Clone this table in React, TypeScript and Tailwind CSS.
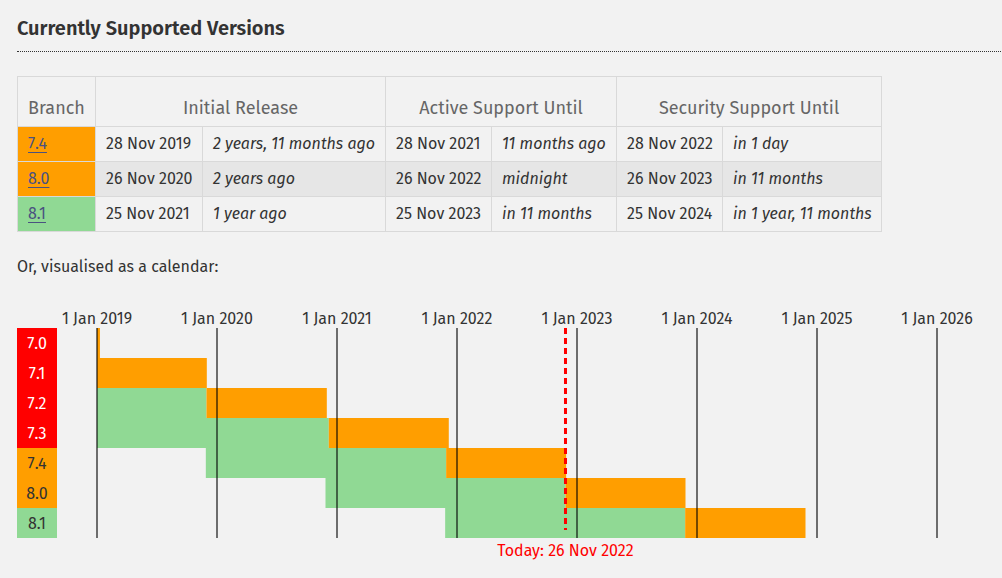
import React from "react";

const FONT = "'Fira Sans', 'Open Sans', 'Noto Sans', sans-serif";

const ORANGE = "#ff9e00";
const GREEN = "#90d994";
const RED = "#ff0000";

type Row = {
  branch: string;
  bg: string;
  rel: string;
  relAgo: string;
  act: string;
  actRel: string;
  sec: string;
  secRel: string;
  shaded: boolean;
};

const rows: Row[] = [
  { branch: "7.4", bg: "bg-[#ff9e00]", rel: "28 Nov 2019", relAgo: "2 years, 11 months ago", act: "28 Nov 2021", actRel: "11 months ago", sec: "28 Nov 2022", secRel: "in 1 day", shaded: false },
  { branch: "8.0", bg: "bg-[#ff9e00]", rel: "26 Nov 2020", relAgo: "2 years ago", act: "26 Nov 2022", actRel: "midnight", sec: "26 Nov 2023", secRel: "in 11 months", shaded: true },
  { branch: "8.1", bg: "bg-[#90d994]", rel: "25 Nov 2021", relAgo: "1 year ago", act: "25 Nov 2023", actRel: "in 11 months", sec: "25 Nov 2024", secRel: "in 1 year, 11 months", shaded: false },
];

const X0 = 97;
const base = Date.UTC(2019, 0, 1);
function dx(y: number, m: number, d: number) {
  const days = (Date.UTC(y, m - 1, d) - base) / 86400000;
  return X0 + (days / 365) * 120;
}

type Br = { name: string; rel: [number, number, number]; act: [number, number, number]; sec: [number, number, number]; color: string; text: string };
const branches: Br[] = [
  { name: "7.0", rel: [2015, 12, 3], act: [2018, 1, 4], sec: [2019, 1, 10], color: RED, text: "#fff" },
  { name: "7.1", rel: [2016, 12, 1], act: [2018, 12, 1], sec: [2019, 12, 1], color: RED, text: "#fff" },
  { name: "7.2", rel: [2017, 11, 30], act: [2019, 11, 30], sec: [2020, 11, 30], color: RED, text: "#fff" },
  { name: "7.3", rel: [2018, 12, 6], act: [2020, 12, 6], sec: [2021, 12, 6], color: RED, text: "#fff" },
  { name: "7.4", rel: [2019, 11, 28], act: [2021, 11, 28], sec: [2022, 11, 28], color: ORANGE, text: "#333" },
  { name: "8.0", rel: [2020, 11, 26], act: [2022, 11, 26], sec: [2023, 11, 26], color: ORANGE, text: "#333" },
  { name: "8.1", rel: [2021, 11, 25], act: [2023, 11, 25], sec: [2024, 11, 25], color: GREEN, text: "#333" },
];

function Chart() {
  const top = 328;
  const rowH = 30;
  const bottom = top + rowH * branches.length;
  const years = [2019, 2020, 2021, 2022, 2023, 2024, 2025, 2026];
  const today = dx(2022, 11, 26);
  return (
    <svg width={985} height={272} className="block mt-[17px]" style={{ fontFamily: FONT }}>
      <g transform="translate(-17,-296)">
        {branches.map((b, i) => {
          const y = top + i * rowH;
          const r = Math.max(X0, dx(...b.rel));
          const a = Math.max(X0, dx(...b.act));
          const s = Math.max(X0, dx(...b.sec));
          return (
            <g key={b.name}>
              {a > r && <rect x={r} y={y} width={a - r} height={rowH} fill={GREEN} />}
              {s > a && <rect x={a} y={y} width={s - a} height={rowH} fill={ORANGE} />}
              <rect x={17} y={y} width={40} height={rowH} fill={b.color} />
              <text x={37} y={y + 21} textAnchor="middle" fontSize={16} fontWeight={400} fill={b.text}>
                {b.name}
              </text>
            </g>
          );
        })}
        {years.map((yr) => {
          const x = X0 + (yr - 2019) * 120;
          return (
            <g key={yr}>
              <line x1={x} y1={top} x2={x} y2={bottom} stroke="#000" strokeOpacity={0.55} strokeWidth={2} />
              <text x={x} y={324} textAnchor="middle" fontSize={16} fontWeight={400} fill="#333">
                1 Jan {yr}
              </text>
            </g>
          );
        })}
        <line x1={today} y1={top} x2={today} y2={bottom - 8} stroke={RED} strokeWidth={3} strokeDasharray="6,4" />
        <text x={today} y={556} textAnchor="middle" fontSize={16} fontWeight={400} fill={RED}>
          Today: 26 Nov 2022
        </text>
      </g>
    </svg>
  );
}

export default function App() {
  const td = "border border-[#d9d9d9] px-[10px] h-[35px] whitespace-nowrap overflow-hidden";
  const th = "border border-[#d9d9d9] font-normal text-[#666] text-[18px] leading-[24px] align-bottom pb-[6px] h-[50px] px-[10px] whitespace-nowrap";
  return (
    <div className="min-h-[578px] bg-[#f2f2f2] pl-[17px] text-[#333] overflow-hidden" style={{ fontFamily: FONT }}>
      <h2 className="pt-[16px] pb-[11px] text-[20px] leading-[24px] font-semibold text-[#333] border-b border-dotted border-[#333] w-[1100px]">
        Currently Supported Versions
      </h2>
      <table className="mt-[24px] border-collapse table-fixed w-[864px] text-[16px] text-[#333]">
        <colgroup>
          <col className="w-[78px]" />
          <col className="w-[107px]" />
          <col className="w-[183px]" />
          <col className="w-[106px]" />
          <col className="w-[125px]" />
          <col className="w-[106px]" />
          <col className="w-[159px]" />
        </colgroup>
        <thead>
          <tr>
            <th className={th}>Branch</th>
            <th className={th} colSpan={2}>Initial Release</th>
            <th className={th} colSpan={2}>Active Support Until</th>
            <th className={th} colSpan={2}>Security Support Until</th>
          </tr>
        </thead>
        <tbody>
          {rows.map((r) => (
            <tr key={r.branch} className={r.shaded ? "bg-[#e6e6e6]" : ""}>
              <td className={`${td} ${r.bg}`}>
                <a className="text-[#4a5280] underline underline-offset-[3px]" href="#">
                  {r.branch}
                </a>
              </td>
              <td className={td}>{r.rel}</td>
              <td className={`${td} italic`}>{r.relAgo}</td>
              <td className={td}>{r.act}</td>
              <td className={`${td} italic`}>{r.actRel}</td>
              <td className={td}>{r.sec}</td>
              <td className={`${td} italic`}>{r.secRel}</td>
            </tr>
          ))}
        </tbody>
      </table>
      <p className="mt-[23px] text-[16px] leading-[24px] text-[#333]">Or, visualised as a calendar:</p>
      <Chart />
    </div>
  );
}
